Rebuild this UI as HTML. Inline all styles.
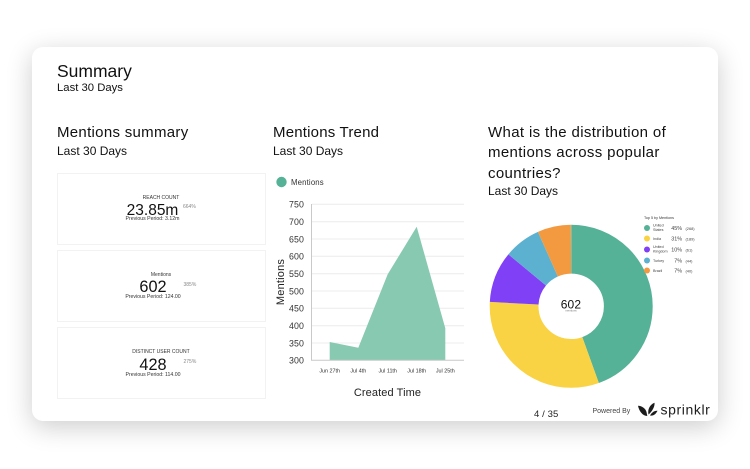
<!DOCTYPE html>
<html><head><meta charset="utf-8"><style>
html,body{margin:0;padding:0;background:#fff}
body{width:750px;height:469px;overflow:hidden;position:relative;font-family:"Liberation Sans",sans-serif;color:#111}
#w{position:absolute;left:0;top:0;width:750px;height:469px;filter:blur(.35px)}
.card{position:absolute;left:32px;top:47px;width:686px;height:374px;background:#fff;border-radius:11px;box-shadow:0 6px 26px rgba(0,0,0,.2)}
.t{position:absolute;white-space:nowrap;line-height:1}
.m{position:absolute;left:57px;width:207px;background:#fff;border:1px solid #f2f2f2}
.c{text-align:center;transform:translateX(-50%)}
</style></head><body><div id="w">
<div class="card"></div>
<div class="t" style="left:57px;top:63px;font-size:17.500px">Summary</div>
<div class="t" style="left:57px;top:83px;font-size:11.300px">Last 30 Days</div>

<div class="t" style="left:57px;top:124.500px;font-size:15px;letter-spacing:.3px">Mentions summary</div>
<div class="t" style="left:57px;top:144.500px;font-size:12px">Last 30 Days</div>
<div class="t" style="left:273px;top:124.500px;font-size:15px;letter-spacing:.2px">Mentions Trend</div>
<div class="t" style="left:273px;top:144.500px;font-size:12px">Last 30 Days</div>
<div class="t" style="left:488px;top:124.500px;font-size:15px;letter-spacing:.36px">What is the distribution of</div>
<div class="t" style="left:488px;top:145px;font-size:15px;letter-spacing:.36px">mentions across popular</div>
<div class="t" style="left:488px;top:165.500px;font-size:15px;letter-spacing:.36px">countries?</div>
<div class="t" style="left:488px;top:185px;font-size:12px">Last 30 Days</div>

<div class="m" style="top:173px;height:70px"></div>
<div class="m" style="top:250px;height:70px"></div>
<div class="m" style="top:327px;height:70px"></div>

<div class="t c" style="left:161px;top:196px;font-size:5px;color:#333">REACH COUNT</div>
<div class="t c" style="left:152.500px;top:202.500px;font-size:15.500px">23.85m</div>
<div class="t" style="left:183px;top:205px;font-size:5px;color:#888">664%</div>
<div class="t c" style="left:152.500px;top:217px;font-size:5.200px;color:#333">Previous Period: 3.12m</div>

<div class="t c" style="left:161px;top:273px;font-size:5px;color:#333">Mentions</div>
<div class="t c" style="left:153px;top:279px;font-size:16.300px">602</div>
<div class="t" style="left:183.500px;top:282.500px;font-size:5px;color:#888">385%</div>
<div class="t c" style="left:153px;top:295px;font-size:5.200px;color:#333">Previous Period: 124.00</div>

<div class="t c" style="left:161px;top:350px;font-size:5px;color:#333">DISTINCT USER COUNT</div>
<div class="t c" style="left:153px;top:357px;font-size:16.300px">428</div>
<div class="t" style="left:183.500px;top:360px;font-size:5px;color:#888">275%</div>
<div class="t c" style="left:153px;top:373px;font-size:5.200px;color:#333">Previous Period: 114.00</div>

<svg style="position:absolute;left:0;top:0" width="750" height="469" viewBox="0 0 750 469" font-family="Liberation Sans, sans-serif">
<circle cx="281.500" cy="182" r="5.200" fill="#55b296"/>
<text x="291" y="185" font-size="7.800" fill="#333" letter-spacing=".15">Mentions</text>
<g stroke="#ececec" stroke-width="1">
<path d="M312 204.300H464M312 221.700H464M312 239H464M312 256.300H464M312 273.700H464M312 291H464M312 308.300H464M312 325.700H464M312 343H464"/>
</g>
<path d="M329.700 342L358.300 347.700L387.700 274.300L416.700 226.700L445.300 328.300V360.300H329.700Z" fill="#88c9b1"/>
<path d="M311.500 204V360.300H464" fill="none" stroke="#c9c9c9" stroke-width="1"/>
<g font-size="8.800" fill="#333" text-anchor="end" letter-spacing=".1">
<text x="304" y="207.500">750</text><text x="304" y="225">700</text><text x="304" y="242.300">650</text><text x="304" y="259.600">600</text><text x="304" y="277">550</text><text x="304" y="294.300">500</text><text x="304" y="311.600">450</text><text x="304" y="329">400</text><text x="304" y="346.300">350</text><text x="304" y="363.600">300</text>
</g>
<g font-size="5.400" fill="#333" text-anchor="middle">
<text x="329.700" y="372.500">Jun 27th</text><text x="358.300" y="372.500">Jul 4th</text><text x="387.700" y="372.500">Jul 11th</text><text x="416.700" y="372.500">Jul 18th</text><text x="445.300" y="372.500">Jul 25th</text>
</g>
<text x="387.500" y="396" font-size="11" fill="#222" text-anchor="middle" letter-spacing=".1">Created Time</text>
<text transform="translate(284 282) rotate(-90)" font-size="11" fill="#222" text-anchor="middle" letter-spacing=".2">Mentions</text>

<g fill="none" stroke-width="48.800" transform="rotate(-90 571.200 306.300)">
<circle cx="571.200" cy="306.300" r="57.100" pathLength="100" stroke="#55b296" stroke-dasharray="44.520 100"/>
<circle cx="571.200" cy="306.300" r="57.100" pathLength="100" stroke="#f9d343" stroke-dasharray="31.400 100" stroke-dashoffset="-44.520"/>
<circle cx="571.200" cy="306.300" r="57.100" pathLength="100" stroke="#8040f5" stroke-dasharray="10.130 100" stroke-dashoffset="-75.920"/>
<circle cx="571.200" cy="306.300" r="57.100" pathLength="100" stroke="#5db1d0" stroke-dasharray="7.310 100" stroke-dashoffset="-86.050"/>
<circle cx="571.200" cy="306.300" r="57.100" pathLength="100" stroke="#f39a40" stroke-dasharray="6.640 100" stroke-dashoffset="-93.360"/>
</g>
<text x="571" y="308.500" font-size="12" fill="#111" text-anchor="middle" letter-spacing=".2">602</text>
<text x="571" y="311.500" font-size="2.800" fill="#777" text-anchor="middle">mentions</text>

<text x="644" y="219" font-size="3.700" fill="#333">Top 5 by Mentions</text>
<circle cx="647" cy="228" r="3" fill="#55b296"/><circle cx="647" cy="238.500" r="3" fill="#f9d343"/><circle cx="647" cy="249.500" r="3" fill="#8040f5"/><circle cx="647" cy="260.500" r="3" fill="#5db1d0"/><circle cx="647" cy="270.500" r="3" fill="#f39a40"/>
<g font-size="3.700" fill="#444">
<text x="653" y="226.500">United</text><text x="653" y="231">States</text>
<text x="653" y="239.800">India</text>
<text x="653" y="248">United</text><text x="653" y="252.500">Kingdom</text>
<text x="653" y="262">Turkey</text>
<text x="653" y="272">Brazil</text>
</g>
<g font-size="5.400" fill="#444" text-anchor="end">
<text x="682" y="230">45%</text><text x="682" y="240.500">31%</text><text x="682" y="251.500">10%</text><text x="682" y="262.500">7%</text><text x="682" y="272.500">7%</text>
</g>
<g font-size="3.900" fill="#444">
<text x="685.500" y="230">(268)</text><text x="685.500" y="240.500">(189)</text><text x="685.500" y="251.500">(61)</text><text x="685.500" y="262.500">(44)</text><text x="685.500" y="272.500">(40)</text>
</g>

<text x="534" y="417" font-size="9.500" fill="#222" letter-spacing=".1">4 / 35</text>
<text x="592.500" y="413" font-size="7" fill="#444">Powered By</text>
<g fill="#1c1c1c">
<path d="M638 405.800C642 406 645.500 408.500 646.500 412L647.300 416C642.500 416 639 411 638 405.800Z"/>
<path d="M654.500 402.800C655 406 652.500 411.500 648.500 414.500C647.300 409.500 650 404.500 654.500 402.800Z"/>
<path d="M657.500 410.800C655 410.500 652 412 650 415.500C653.500 416.300 656 414 657.500 410.800Z"/>
</g>
<text x="660.500" y="414.500" font-size="14" fill="#1c1c1c" letter-spacing=".6">sprinklr</text>
</svg>
</div></body></html>
